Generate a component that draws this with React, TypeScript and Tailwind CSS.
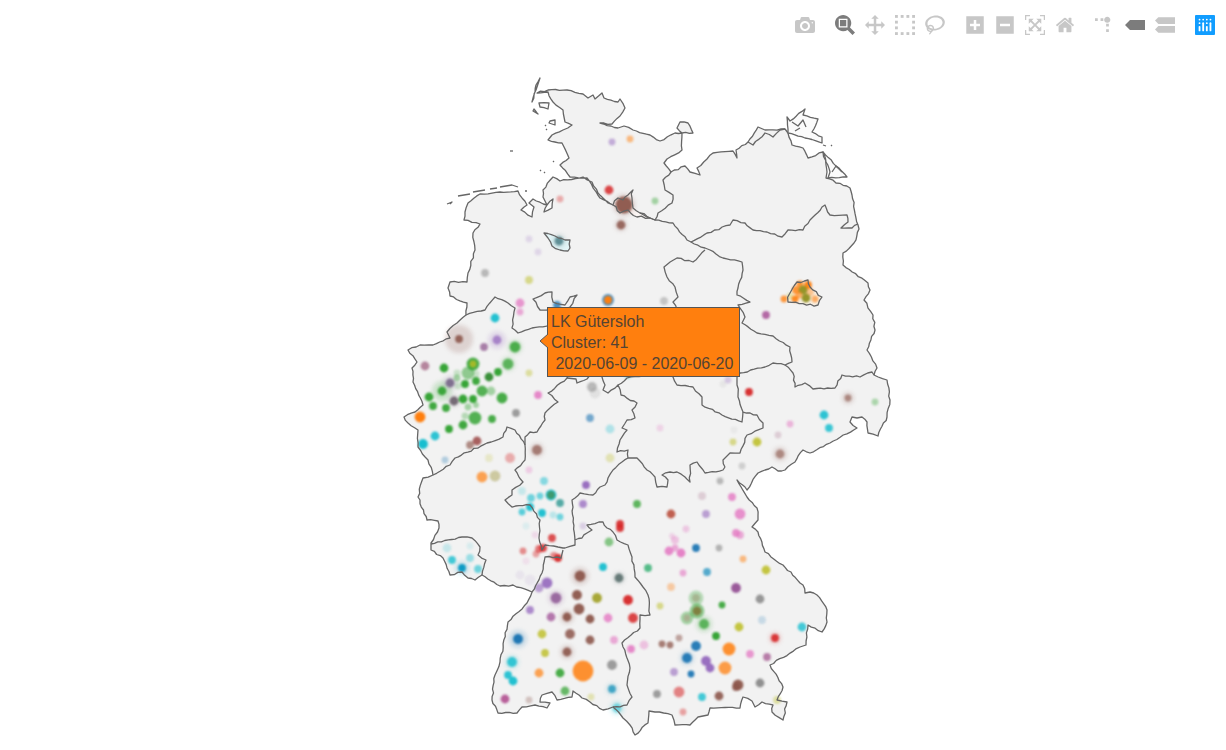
const C = {
  blue: "#1f77b4",
  orange: "#ff7f0e",
  green: "#2ca02c",
  red: "#d62728",
  purple: "#9467bd",
  brown: "#8c564b",
  pink: "#e377c2",
  gray: "#7f7f7f",
  olive: "#bcbd22",
  cyan: "#17becf",
};

// x, y, radius, colour, opacity, halo radius
type Dot = [number, number, number, string, number, number?];

const dots: Dot[] = [
  [612, 142, 3, C.purple, 0.5], [630, 139, 3, C.orange, 0.5], [609, 190, 4, C.red, 0.85], [624, 205, 8, C.brown, 0.95, 10],
  [621, 225, 4, C.brown, 0.85, 5], [560, 199, 3, C.red, 0.35], [529, 239, 3, C.purple, 0.2], [538, 252, 3, C.purple, 0.2],
  [559, 241, 4, "#5f8f96", 1, 6], [485, 273, 3.5, C.gray, 0.5], [529, 280, 3.5, C.olive, 0.5], [655, 201, 3, C.green, 0.4],
  [520, 303, 4, C.pink, 0.75], [520, 312, 3, C.pink, 0.6], [495, 318, 4, C.cyan, 0.95], [459, 339, 3.5, C.brown, 0.9, 13],
  [497, 340, 4, C.purple, 0.75, 8], [484, 347, 3.5, "#9a6a9a", 0.85], [515, 347, 5, C.green, 0.8, 6], [425, 366, 4, "#a06080", 0.75],
  [444, 368, 4, C.green, 0.95], [473, 364, 6, C.green, 0.85], [473, 364, 3, C.olive, 0.8], [508, 364, 5, C.green, 0.7, 6],
  [498, 372, 3.5, C.green, 0.95], [489, 377, 4, "#2f8a2f", 0.95], [468, 373, 6, C.green, 0.5], [457, 373, 3, C.green, 0.2],
  [476, 374, 3, C.green, 0.2], [457, 378, 3, C.green, 0.4], [476, 381, 3.5, C.green, 0.9], [465, 384, 3.5, C.green, 0.95],
  [450, 383, 4, "#7f6f8f", 1, 6], [482, 391, 5, C.green, 0.8], [491, 391, 4, C.green, 0.4], [442, 391, 4, C.green, 0.9, 9],
  [458, 386, 3, C.green, 0.2], [429, 397, 4, C.green, 0.95], [454, 401, 4, "#756a75", 1, 5], [463, 399, 4, C.green, 0.95],
  [473, 399, 3.5, C.green, 0.95], [502, 398, 5, C.green, 0.85], [433, 406, 3.5, C.green, 0.9], [446, 408, 3.5, C.green, 0.9],
  [468, 407, 3, C.green, 0.4], [476, 405, 2.5, C.green, 0.4], [465, 416, 3, C.green, 0.3], [475, 418, 6, C.green, 0.8],
  [492, 419, 3.5, C.green, 0.85], [516, 413, 3.5, C.gray, 0.75], [420, 417, 5, C.orange, 1], [463, 425, 4, C.green, 0.9],
  [449, 429, 3.5, C.green, 0.95], [435, 436, 4, C.cyan, 0.9], [423, 444, 4.5, C.cyan, 1], [477, 441, 4, "#a0504f", 0.9],
  [470, 445, 3.5, C.brown, 0.65], [445, 460, 3, C.blue, 0.3], [489, 458, 3.5, C.olive, 0.2], [510, 458, 4.5, C.red, 0.35],
  [537, 450, 4.5, C.brown, 0.7, 6], [529, 470, 3, C.pink, 0.3], [482, 477, 5, C.orange, 0.7], [495, 476, 5, "#a8a050", 0.5],
  [529, 373, 3, C.olive, 0.4], [538, 395, 3.5, C.pink, 0.85], [557, 305, 3.5, C.blue, 0.8], [608, 300, 5.5, C.blue, 0.8],
  [608, 300, 3.5, C.orange, 1], [664, 301, 3.5, C.gray, 0.4], [592, 387, 4.5, C.gray, 0.5], [595, 393, 5, C.gray, 0.15],
  [590, 418, 3.5, C.blue, 0.6], [610, 429, 4, C.cyan, 0.3], [610, 458, 4, C.olive, 0.3], [586, 485, 3.5, C.purple, 0.95],
  [583, 504, 3.5, C.purple, 0.75], [637, 504, 3.5, C.green, 0.75], [628, 374, 4, C.cyan, 0.5],
  [544, 481, 3.5, C.cyan, 0.5], [522, 491, 3.5, C.cyan, 0.2], [531, 498, 3.5, C.cyan, 0.6], [540, 496, 3, C.cyan, 0.6],
  [551, 495, 5, C.cyan, 0.95], [551, 495, 3.5, "#3f9a70", 1], [560, 503, 3.5, "#55aaa5", 1], [522, 512, 3, C.cyan, 0.7],
  [530, 507, 3.5, C.cyan, 0.95], [542, 513, 3.5, C.cyan, 0.95], [553, 515, 3, C.cyan, 0.25], [560, 517, 3, C.cyan, 0.6],
  [526, 526, 3, C.cyan, 0.1], [535, 535, 3, C.pink, 0.2], [583, 526, 3, C.purple, 0.25], [552, 538, 3.5, C.red, 0.8],
  [539, 549, 3.5, C.red, 0.6], [543, 548, 3.5, C.red, 0.85], [523, 551, 3, C.red, 0.5], [536, 554, 3, C.red, 0.4],
  [526, 561, 3, C.pink, 0.15], [554, 556, 3.5, C.red, 0.5], [558, 558, 3.5, C.red, 0.95], [620, 524, 3.5, C.red, 0.9],
  [620, 528, 3.5, C.red, 0.9], [609, 542, 4, C.green, 0.55], [603, 567, 3.5, C.cyan, 0.95], [580, 576, 5, C.brown, 0.95, 8],
  [619, 578, 4, "#667a78", 1, 5], [520, 575, 4, C.purple, 0.1], [530, 580, 5, C.purple, 0.1], [547, 583, 5, C.purple, 0.9],
  [539, 588, 4, C.purple, 0.6], [648, 568, 3.5, "#55bb88", 1],
  [447, 548, 4, C.cyan, 0.2], [470, 546, 3, C.cyan, 0.12], [470, 558, 3.5, C.cyan, 0.4], [452, 560, 3.5, C.cyan, 0.8],
  [462, 568, 3.5, "#0d9ac4", 1, 6], [478, 569, 3.5, C.cyan, 0.6], [556, 598, 5, "#9a6aa0", 1, 7], [530, 610, 3.5, C.purple, 0.75],
  [551, 617, 4, "#b070a8", 0.95], [567, 617, 4, C.brown, 0.95, 6], [577, 595, 4.5, C.brown, 0.95], [597, 598, 4.5, "#a8a838", 1],
  [579, 609, 5, C.brown, 0.95], [590, 619, 4, C.brown, 0.95], [628, 600, 4.5, C.red, 0.95], [633, 618, 4.5, C.red, 0.85],
  [608, 618, 4, C.pink, 0.8], [518, 639, 4.5, C.blue, 1, 8], [542, 634, 4, C.olive, 0.8], [570, 634, 4.5, C.brown, 0.85],
  [590, 640, 4, C.brown, 0.9], [614, 640, 3.5, C.pink, 0.6], [631, 649, 3.5, C.pink, 0.85], [644, 645, 4, C.pink, 0.4],
  [545, 653, 3.5, C.olive, 0.8], [567, 652, 4, C.brown, 0.9, 6], [512, 662, 4.5, C.cyan, 0.85, 6], [508, 675, 3.5, C.cyan, 0.9],
  [513, 681, 4, C.cyan, 0.95], [539, 673, 4, C.orange, 0.7], [560, 673, 4, C.green, 0.85], [583, 671, 10, C.orange, 0.85],
  [612, 665, 4.5, C.gray, 0.75], [612, 689, 3.5, "#40a5c5", 1, 5], [565, 691, 4, C.green, 0.7], [505, 699, 4, "#b8609a", 1],
  [529, 700, 3, C.brown, 0.3], [591, 697, 3, C.olive, 0.3], [617, 708, 4, C.cyan, 0.5, 6],
  [686, 529, 3, C.pink, 0.35], [672, 536, 2.5, C.pink, 0.25], [675, 540, 3.5, C.pink, 0.4], [669, 551, 4, C.pink, 0.85],
  [675, 548, 3, C.pink, 0.6], [681, 553, 4, C.pink, 0.9], [696, 548, 3.5, C.blue, 0.95], [719, 548, 3, C.gray, 0.55],
  [743, 559, 3, C.orange, 0.5], [683, 573, 3, C.pink, 0.6], [707, 572, 3.5, "#55aacc", 1],
  [766, 570, 4, C.olive, 0.85], [671, 587, 3.5, C.orange, 0.35], [736, 588, 4.5, "#9a5a9a", 1], [696, 598, 7, C.green, 0.3],
  [696, 598, 3.5, "#a5b590", 1], [697, 611, 7, C.green, 0.5], [697, 611, 4, "#7f8040", 1], [687, 618, 6, C.green, 0.4],
  [687, 618, 3, "#a8b090", 1], [704, 624, 4.5, C.green, 0.7, 7], [660, 606, 3, C.olive, 0.5], [722, 605, 3, C.green, 0.85],
  [760, 599, 4, C.gray, 0.8], [739, 627, 4, C.olive, 0.85], [762, 620, 3.5, C.blue, 0.2], [802, 627, 4, C.cyan, 0.8],
  [775, 638, 3.5, C.red, 0.9, 5], [716, 636, 3.5, C.green, 0.95], [679, 638, 3, C.brown, 0.5], [662, 644, 3, C.brown, 0.75],
  [670, 645, 3, C.brown, 0.75], [696, 646, 4.5, C.blue, 0.95], [729, 649, 6, C.orange, 0.85], [750, 654, 3.5, C.pink, 0.75],
  [767, 657, 3.5, "#b070a0", 0.9], [687, 658, 4.5, C.blue, 0.95, 6], [706, 661, 4.5, C.purple, 0.95], [710, 668, 4, C.purple, 0.95],
  [725, 668, 6, C.orange, 0.75], [674, 672, 3.5, C.purple, 0.6], [691, 674, 3, C.blue, 0.95], [736, 687, 3.5, C.brown, 0.85],
  [738, 685, 5, C.brown, 0.95], [760, 683, 4, C.gray, 0.85], [657, 694, 3.5, C.gray, 0.75], [679, 692, 5, C.red, 0.55],
  [702, 697, 3.5, C.cyan, 0.8], [719, 696, 4, C.brown, 0.9], [777, 700, 3.5, C.olive, 0.4], [683, 712, 3, C.red, 0.4],
  [736, 533, 3.5, C.pink, 0.8], [740, 535, 3.5, C.pink, 0.6],
  [766, 315, 3.5, "#b060a0", 0.95], [728, 380, 3, C.purple, 0.3], [723, 384, 3, C.gray, 0.1], [749, 392, 3.5, C.red, 0.95],
  [848, 398, 3, C.brown, 0.6, 5], [875, 402, 3, C.green, 0.35], [824, 415, 4, C.cyan, 0.9], [829, 428, 3.5, C.cyan, 0.85],
  [790, 424, 3, C.pink, 0.5], [660, 428, 3, C.pink, 0.25], [734, 430, 3, C.gray, 0.08], [778, 435, 3, "#a06080", 0.25],
  [733, 442, 3, C.olive, 0.5], [757, 442, 4, C.olive, 0.85], [780, 454, 4, C.brown, 0.6, 6], [742, 466, 3, C.gray, 0.3],
  [720, 481, 3, C.gray, 0.5], [702, 496, 3.5, "#a06080", 0.25], [732, 497, 3.5, C.pink, 0.8], [671, 514, 4, "#c06050", 1],
  [706, 514, 3.5, C.purple, 0.6], [740, 514, 5, C.pink, 0.8],
  [800, 284, 3, C.orange, 0.8], [808, 285, 3.5, C.orange, 0.95], [790, 296, 3, C.olive, 0.3], [796, 290, 3.5, C.orange, 0.8],
  [810, 292, 3.5, C.orange, 0.4], [815, 299, 3, C.orange, 0.6], [784, 299, 3, C.orange, 0.8], [795, 299, 3, C.orange, 0.9],
  [803, 290, 4, "#8f8f20", 0.95], [806, 298, 4, "#8f8f20", 0.95], [799, 295, 3, C.orange, 0.6],
];

// borders are drawn from a coarse trace, this gives them back their jagged look
let seed = 7;
const rnd = () => {
  seed = (seed * 16807) % 2147483647;
  return seed / 2147483647 - 0.5;
};

const rough = (d: string, amp = 1.6) =>
  d
    .split("M")
    .filter((s) => s.trim())
    .map((sub) => {
      const closed = sub.includes("Z");
      const n = sub.replace("Z", "").trim().split(/\s+/).map(Number);
      const pts: [number, number][] = [];
      for (let i = 0; i < n.length; i += 2) pts.push([n[i], n[i + 1]]);
      if (closed) pts.push(pts[0]);
      const out: string[] = [`${pts[0][0]} ${pts[0][1]}`];
      for (let i = 1; i < pts.length; i++) {
        const [ax, ay] = pts[i - 1];
        const [bx, by] = pts[i];
        const len = Math.hypot(bx - ax, by - ay);
        const steps = Math.floor(len / 3.5);
        for (let s = 1; s < steps; s++) {
          const t = s / steps;
          const off = rnd() * amp;
          const px = ax + (bx - ax) * t + (-(by - ay) / len) * off;
          const py = ay + (by - ay) * t + ((bx - ax) / len) * off;
          out.push(`${px.toFixed(1)} ${py.toFixed(1)}`);
        }
        out.push(`${bx} ${by}`);
      }
      return `M${out.join(" ")}${closed ? " Z" : ""}`;
    })
    .join(" ");

const outer = rough(
  "M537 93 548 90 567 90 583 94 588 98 593 95 595 99 602 93 604 98 618 102 620 99 625 108 620 116 612 124 600 123 611 126 618 128 624 126 633 130 650 135 660 141 675 133 682 133 677 128 680 122 688 123 693 133 682 133 682 150 667 159 664 163 671 172 685 166 690 172 700 175 697 168 707 159 713 153 733 151 737 158 736 150 748 142 758 127 765 130 785 129 788 133 792 145 803 148 808 158 823 152 826 165 827 172 826 178 850 188 852 195 858 225 859 229 854 243 843 253 843 265 868 283 870 290 864 300 873 315 875 330 867 350 877 368 874 375 887 380 890 400 887 417 878 436 868 433 867 422 862 417 857 418 852 417 850 422 857 428 830 443 810 453 803 450 795 462 785 470 778 471 772 467 758 473 747 490 745 487 737 480 747 497 757 508 758 520 752 527 758 532 765 552 783 565 803 585 805 593 810 592 817 595 827 610 827 622 822 632 808 625 806 645 800 647 770 665 783 687 777 700 787 702 783 720 772 712 773 705 762 702 755 707 752 701 743 697 740 708 710 708 708 715 698 717 690 725 675 725 672 715 655 712 649 711 648 723 635 735 630 725 623 718 613 707 603 710 590 702 582 698 573 691 572 697 557 700 552 692 542 695 540 702 550 703 547 708 535 705 522 707 517 713 498 713 492 700 495 675 500 662 508 622 527 603 532 592 513 585 500 586 482 575 475 580 468 578 462 572 450 575 443 558 431 550 431 543 439 528 438 521 427 520 418 497 423 478 433 475 428 460 418 447 418 430 408 423 404 417 415 412 423 405 413 382 412 368 417 362 408 350 420 345 433 345 450 338 447 332 457 323 466 315 467 303 450 296 448 288 450 282 467 282 468 273 475 250 473 233 480 224 464 220 465 212 468 203 480 194 500 192 518 191 527 205 521 210 532 217 534 207 529 203 533 199 547 205 543 197 543 190 553 177 560 181 583 177 592 182 598 193 608 203 613 205 600 198 587 178 570 177 560 165 569 158 562 143 548 140 552 135 563 130 572 125 565 122 563 110 553 102 548 92 Z",
);

const borders = [
  "M671 172 663 180 665 190 673 195 672 203 658 213 655 220 650 218 640 213",
  "M650 218 655 220 673 223 687 240 691 242 707 233 730 225 733 220 745 223 753 230 767 232 782 237 788 230 803 230 810 220 825 205 830 215 847 215 848 222 841 228 852 228 858 224",
  "M691 242 705 248 710 250 723 258 742 262 743 270 738 288 737 295 750 302 738 305 745 317 742 323 757 333 773 336 790 347 792 362 785 365 793 373 795 387 805 383 813 389 835 388 842 375 860 377 872 372 874 375",
  "M785 365 773 363 765 367 740 373 737 377 738 397 743 412 757 415 763 423 763 428 747 435 740 453 730 453 723 460 725 467",
  "M743 412 742 422 722 415 702 405 702 397 693 387 677 385 673 377 672 368",
  "M705 250 693 262 677 258 664 267 667 277 675 287 678 297 673 302 677 310",
  "M466 315 485 310 495 297 508 303 515 308 512 328 518 333 532 328 550 325",
  "M550 310 540 310 533 299 545 293 552 292 553 302 565 305 570 297 577 295 570 307 556 312",
  "M433 475 450 465 455 458 487 443 503 437 507 427 515 430 525 445 525 460 515 470 523 482 512 490 512 495 505 500 512 507 530 505 540 520 539 538 542 550 545 545 558 547 563 548 565 548 575 545 575 540 582 538 587 533 592 530 587 525 603 522 607 528 613 532 617 540 628 545 632 557 635 577 643 587 648 595 650 615 640 615 640 628 622 643 630 668 627 685 632 697 627 705 613 707",
  "M532 592 542 573 545 557 561 558 563 550",
  "M575 540 572 500 580 493 593 495 600 487 605 485 608 478 613 470 628 458",
  "M570 372 567 378 548 393 558 402 545 413 545 420 537 432 530 432 525 437 525 445",
  "M567 378 576 379 577 383 587 379 592 372",
  "M600 370 602 377 605 385 603 390 608 393 618 385 621 395 637 403 632 410 635 418 627 420 622 428 627 430 620 440 617 452 628 450 628 458 637 458 647 470 655 477 657 487 667 487 668 480 662 475 670 472 677 472 685 477 690 482 690 465 697 462 705 473 723 470 725 467",
  "M618 385 627 378 643 376",
  "M431 544 462 537 472 538 480 547 478 555 486 560 482 575",
  "M748 142 753 145 765 133 773 137 780 130 785 129",
].map((d) => rough(d));

const islands = [
  "M540 78 536 85 535 92 532 102 536 90 538 84 Z",
  "M539 103 549 103 548 109 540 107 Z",
  "M534 109 537 113 538 114 533 111 Z",
  "M550 121 555 120 555 125 549 123 Z",
  "M787 117 790 121 805 109 803 115 818 119 812 132 822 137 822 143 805 138 788 133 Z",
  "M823 152 847 177 828 178 830 172 Z",
  "M547 205 553 199 552 208 544 212 Z",
].map((d) => rough(d, 1.2));

const rugenDetail = "M792 122 798 126 803 120 806 127 M795 131 800 128 M842 172 836 166 832 172";

const shoals = [
  "M447 204 452 202 450 204",
  "M458 196 470 194",
  "M473 192 485 190",
  "M490 189 497 188",
  "M500 187 512 185 518 187",
  "M525 191 527 191",
  "M510 151 513 151",
  "M553 161 554 162",
  "M540 170 541 171 M544 172 545 173",
  "M545 125 546 126 M546 129 547 130",
  "M823 145 826 146 M831 146 832 145",
];

const hamburg = rough("M613 205 618 198 623 200 628 195 633 190 632 198 633 208 640 213 650 218 637 217 628 210 620 213 Z", 2.5);
const bremen = rough("M544 233 555 236 565 240 570 240 570 248 568 251 560 250 552 246 548 238 Z", 1.6);
const berlin = rough("M790 293 797 282 808 280 810 287 822 297 818 305 788 302 Z", 3);

const Icon = ({ d, vb, t, active }: { d: string; vb: string; t: string; active?: boolean }) => (
  <svg viewBox={vb} className={`h-5 w-5 ${active ? "fill-[rgba(68,68,68,0.7)]" : "fill-[rgba(68,68,68,0.3)]"}`}>
    <path d={d} transform={t} />
  </svg>
);

const flip = "matrix(1 0 0 -1 0 850)";

const SelectIcon = () => (
  <svg viewBox="0 0 1000 1000" className="h-5 w-5 fill-[rgba(68,68,68,0.3)]">
    {[0, 286, 571, 857].map((p) => (
      <g key={p}>
        <rect x={p} y={0} width={143} height={143} />
        <rect x={p} y={857} width={143} height={143} />
      </g>
    ))}
    {[286, 571].map((p) => (
      <g key={p}>
        <rect x={0} y={p} width={143} height={143} />
        <rect x={857} y={p} width={143} height={143} />
      </g>
    ))}
  </svg>
);

const PlotlyLogo = () => (
  <svg viewBox="0 0 132 132" className="h-5 w-5">
    <rect width="132" height="132" rx="6" fill="#119dff" />
    <g fill="#fff">
      <circle cx="78" cy="54" r="6" />
      <circle cx="102" cy="30" r="6" />
      <circle cx="78" cy="30" r="6" />
      <circle cx="54" cy="30" r="6" />
      <circle cx="30" cy="30" r="6" />
      <circle cx="30" cy="54" r="6" />
      <path d="M30,72a6,6,0,0,0-6,6v24a6,6,0,0,0,12,0V78A6,6,0,0,0,30,72Z" />
      <path d="M78,72a6,6,0,0,0-6,6v24a6,6,0,0,0,12,0V78A6,6,0,0,0,78,72Z" />
      <path d="M54,48a6,6,0,0,0-6,6v48a6,6,0,0,0,12,0V54A6,6,0,0,0,54,48Z" />
      <path d="M102,48a6,6,0,0,0-6,6v48a6,6,0,0,0,12,0V54A6,6,0,0,0,102,48Z" />
    </g>
  </svg>
);

const ModeBar = () => (
  <div className="flex h-[35px] justify-end gap-5 pr-[11px] pt-[15px] blur-[0.4px]">
    <div className="flex gap-2.5">
      <Icon vb="0 0 1000 1000" t={flip} d="m500 450c-83 0-150-67-150-150 0-83 67-150 150-150 83 0 150 67 150 150 0 83-67 150-150 150z m400 150h-120c-16 0-34 13-39 29l-31 93c-6 15-23 28-40 28h-340c-16 0-34-13-39-28l-31-94c-6-15-23-28-40-28h-120c-55 0-100-45-100-100v-450c0-55 45-100 100-100h800c55 0 100 45 100 100v450c0 55-45 100-100 100z m-400-550c-138 0-250 112-250 250 0 138 112 250 250 250 138 0 250-112 250-250 0-138-112-250-250-250z m365 380c-19 0-35 16-35 35 0 19 16 35 35 35 19 0 35-16 35-35 0-19-16-35-35-35z" />
    </div>
    <div className="flex gap-2.5">
      <Icon active vb="0 0 1000 1000" t={flip} d="m1000-25l-250 251c40 63 63 138 63 218 0 224-182 406-407 406-224 0-406-182-406-406s183-406 407-406c80 0 155 22 218 62l250-250 125 125z m-812 250l0 438 437 0 0-438-437 0z m62 375l313 0 0-312-313 0 0 312z" />
      <Icon vb="0 0 1000 1000" t={flip} d="m1000 350l-187 188 0-125-250 0 0 250 125 0-188 187-187-187 125 0 0-250-250 0 0 125-188-188 186-187 0 125 252 0 0-250-125 0 187-188 188 188-125 0 0 250 250 0 0-126 187 188z" />
      <SelectIcon />
      <Icon vb="0 0 1031 1000" t={flip} d="m1018 538c-36 207-290 336-568 286-277-48-473-256-436-463 10-57 36-108 76-151-13-66 11-137 68-183 34-28 75-41 114-42l-55-70 0 0c-2-1-3-2-4-3-10-14-8-34 5-45 14-11 34-8 45 4 1 1 2 3 2 5l0 0 113 140c16 11 31 24 45 40 4 3 6 7 8 11 48-3 100 0 151 9 278 48 473 255 436 462z m-624-379c-80 14-149 48-197 96 42 42 109 47 156 9 33-26 47-66 41-105z m-187-74c-19 16-33 37-39 60 50-32 109-55 174-68-42-25-95-24-135 8z m360 75c-34-7-69-9-102-8 8 62-16 128-68 170-73 59-175 54-244-5-9 20-16 40-20 61-28 159 121 317 333 354s407-60 434-217c28-159-121-318-333-355z" />
    </div>
    <div className="flex gap-2.5">
      <Icon vb="0 0 875 1000" t={flip} d="m1 787l0-875 875 0 0 875-875 0z m687-500l-187 0 0-187-125 0 0 187-188 0 0 125 188 0 0 187 125 0 0-187 187 0 0-125z" />
      <Icon vb="0 0 875 1000" t={flip} d="m0 788l0-876 875 0 0 876-875 0z m688-500l-500 0 0 125 500 0 0-125z" />
      <Icon vb="0 0 1000 1000" t={flip} d="m250 850l-187 0-63 0 0-62 0-188 63 0 0 188 187 0 0 62z m688 0l-188 0 0-62 188 0 0-188 62 0 0 188 0 62-62 0z m-875-938l0 188-63 0 0-188 0-62 63 0 187 0 0 62-187 0z m875 188l0-188-188 0 0-62 188 0 62 0 0 62 0 188-62 0z m-125 188l-1 0-93-94-156 156 156 156 92-93 2 0 0 250-250 0 0-2 93-92-156-156-156 156 94 92 0 2-250 0 0-250 0 0 93 93 157-156-157-156-93 94 0 0 0-250 250 0 0 0-94 93 156 157 156-157-93-93 0 0 250 0 0 250z" />
      <Icon vb="0 0 928.6 1000" t={flip} d="m786 296v-267q0-15-11-26t-25-10h-214v214h-143v-214h-214q-15 0-25 10t-11 26v267q0 1 0 2t0 2l321 264 321-264q1-1 1-4z m124 39l-34-41q-5-5-12-6h-2q-7 0-12 3l-386 322-386-322q-7-4-13-4-7 2-12 7l-35 41q-4 5-3 13t6 12l401 334q18 15 42 15t43-15l136-114v109q0 8 5 13t13 5h107q8 0 13-5t5-13v-227l122-102q5-5 6-12t-4-13z" />
    </div>
    <div className="flex gap-2.5">
      <Icon vb="0 0 1000 1000" t="matrix(1.5 0 0 -1.5 0 850)" d="M512 409c0-57-46-104-103-104-57 0-104 47-104 104 0 57 47 103 104 103 57 0 103-46 103-103z m-327-39l92 0 0 92-92 0z m-185 0l92 0 0 92-92 0z m370-186l92 0 0 93-92 0z m0-184l92 0 0 92-92 0z" />
      <Icon active vb="0 0 1500 1000" t={flip} d="m375 725l0 0-375-375 375-374 0-1 1125 0 0 750-1125 0z" />
      <Icon vb="0 0 1125 1000" t={flip} d="m187 786l0 2-187-188 188-187 0 0 937 0 0 373-938 0z m0-499l0 1-187-188 188-188 0 0 937 0 0 376-938-1z" />
    </div>
    <div className="flex">
      <PlotlyLogo />
    </div>
  </div>
);

const GermanyMap = () => (
  <svg viewBox="0 35 1226 715" className="block h-[715px] w-[1226px]">
    <path d={outer} fill="#f2f2f2" />
    <path d={bremen} fill="#e4f5f7" />
    <path d={hamburg} fill="#faf5f3" />
    <path d={berlin} fill="#f8f0e4" />
    <g className="blur-[2px]">
      {dots.map(([x, y, , c, , h], i) =>
        h ? <circle key={i} cx={x} cy={y} r={h + 1} fill={c} opacity={0.2} /> : null,
      )}
    </g>
    <g className="blur-[1px]">
      {dots.map(([x, y, r, c, o], i) => (
        <circle key={i} cx={x} cy={y} r={r + 0.4} fill={c} opacity={o} />
      ))}
    </g>
    <g fill="none" stroke="#666" strokeWidth="1.3" strokeLinejoin="round" className="blur-[0.25px]">
      <path d={outer} />
      {borders.map((d, i) => (
        <path key={i} d={d} />
      ))}
      <path d={bremen} />
      <path d={hamburg} />
      <path d={berlin} />
      {islands.map((d, i) => (
        <path key={i} d={d} fill="#fbfbfb" />
      ))}
      <path d={rugenDetail} />
      {shoals.map((d, i) => (
        <path key={i} d={d} />
      ))}
    </g>
  </svg>
);

export default function App() {
  return (
    <div className="relative h-[750px] w-[1226px] overflow-hidden bg-white">
      <ModeBar />
      <GermanyMap />
      <div className="absolute left-[547px] top-[307px] h-[70px] w-[193px] whitespace-pre border border-[#555] bg-[#ff7f0e] pl-[3px] pt-[3px] font-['Liberation_Sans',Arial,sans-serif] text-base leading-[21px] text-[#554433]">
        <svg viewBox="0 0 8 14" className="absolute left-[-8px] top-[26px] h-3.5 w-2 overflow-visible">
          <path d="M8 0 0 7 8 14" fill="#ff7f0e" stroke="#555" strokeWidth="1" />
        </svg>
        <div>LK Gütersloh</div>
        <div>Cluster: 41</div>
        <div> 2020-06-09 - 2020-06-20</div>
      </div>
    </div>
  );
}
